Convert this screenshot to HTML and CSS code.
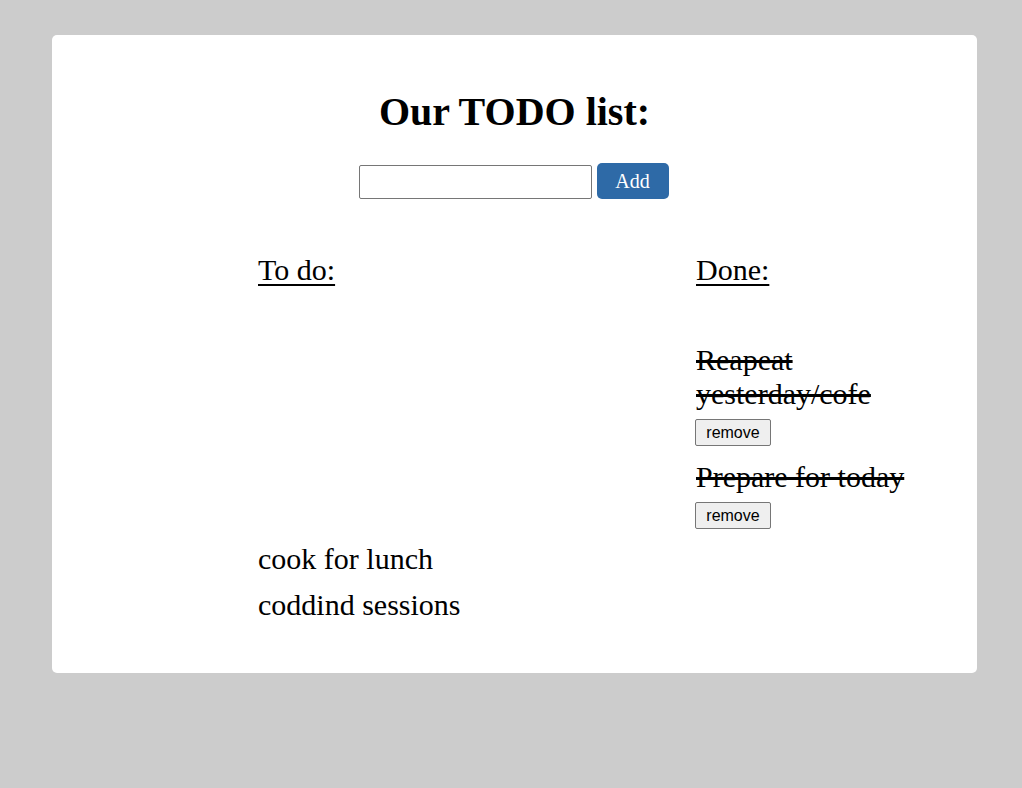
FILE: index.html
```html
<!DOCTYPE html>
<html>
<head>
<meta charset="utf-8">
<link rel="stylesheet" href="styles.css">
</head>
<body>
<div class="card">
  <h1 class="title">Our TODO list:</h1>
  <form class="add-form">
    <input class="add-input" type="text">
    <button class="add-btn" type="button">Add</button>
  </form>
  <div class="columns">
    <div class="col col-todo">
      <h2 class="col-title">To do:</h2>
      <ul class="todo-list">
        <li class="todo-item">cook for lunch</li>
        <li class="todo-item">coddind sessions</li>
      </ul>
    </div>
    <div class="col col-done">
      <h2 class="col-title">Done:</h2>
      <ul class="done-list">
        <li class="done-item">
          <p class="done-text">Reapeat yesterday/cofe</p>
          <button class="remove-btn" type="button">remove</button>
        </li>
        <li class="done-item">
          <p class="done-text">Prepare for today</p>
          <button class="remove-btn" type="button">remove</button>
        </li>
      </ul>
    </div>
  </div>
</div>
</body>
</html>
```

FILE: styles.css
```css
html, body {
  margin: 0;
  padding: 0;
}
body {
  background: #cccccc;
  font-family: "Liberation Serif", "Times New Roman", serif;
  color: #000;
  padding: 35px 45px 0 52px;
  height: 788px;
  box-sizing: border-box;
}
.card {
  background: #fff;
  border-radius: 5px;
  padding: 53px 0 53px 0;
  box-sizing: border-box;
  height: 638px;
}
.title {
  margin: 0;
  text-align: center;
  font-size: 40px;
  font-weight: bold;
}
.add-form {
  margin: 28px 0 0 0;
  padding-right: 2px;
  display: flex;
  justify-content: center;
  align-items: flex-end;
  gap: 5px;
}
.add-input {
  width: 233px;
  height: 34px;
  box-sizing: border-box;
  border: 1px solid #767676;
  border-radius: 2px;
  margin: 0;
  padding: 2px 4px;
}
.add-btn {
  width: 72px;
  height: 36px;
  background: #2e6aa7;
  color: #fff;
  border: none;
  border-radius: 5px;
  font-family: "Liberation Serif", serif;
  font-size: 20px;
  margin: 0;
  padding: 0;
}
.columns {
  display: flex;
  margin-top: 54px;
  padding-left: 206px;
}
.col-todo {
  width: 438px;
}
.col-done {
  width: 220px;
}
.col-title {
  margin: 0;
  font-size: 30px;
  font-weight: normal;
  text-decoration: underline;
  text-decoration-thickness: 2px;
  text-underline-offset: 4px;
}
.todo-list, .done-list {
  list-style: none;
  margin: 0;
  padding: 0;
}
.todo-list {
  padding-top: 255px;
}
.todo-item {
  font-size: 30px;
  margin-bottom: 11.5px;
}
.todo-item:last-child {
  margin-bottom: 0;
}
.done-list {
  padding-top: 56px;
}
.done-item {
  margin-bottom: 14px;
}
.done-text {
  margin: 0 0 8px 0;
  font-size: 30px;
  text-decoration: line-through;
}
.remove-btn {
  font-family: "Liberation Sans", Arial, sans-serif;
  font-size: 16px;
  width: 76px;
  height: 27px;
  padding: 0;
  border: 1px solid #767676;
  border-radius: 2px;
  background: #efefef;
  color: #000;
  margin: 0 0 0 -1px;
}
```
